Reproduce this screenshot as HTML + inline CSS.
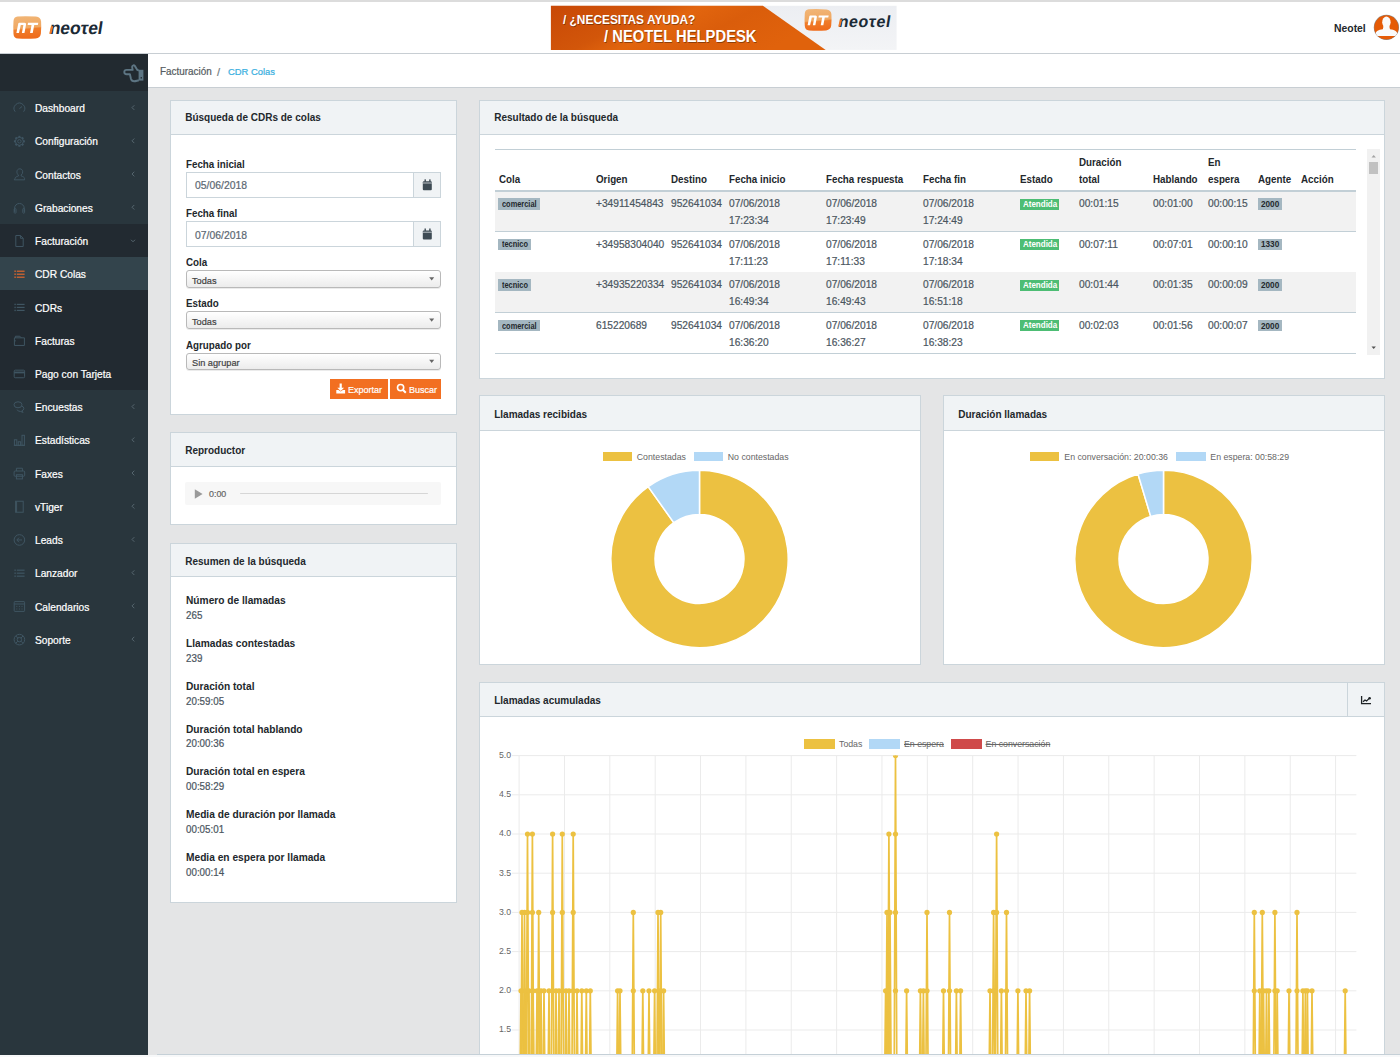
<!DOCTYPE html><html><head><meta charset="utf-8"><style>
html,body{margin:0;padding:0;}
body{width:1400px;height:1057px;overflow:hidden;position:relative;background:#e4e5e6;font-family:"Liberation Sans",sans-serif;}
.t{position:absolute;white-space:nowrap;}
.s{-webkit-text-stroke:0.22px currentColor;}
.r{position:absolute;box-sizing:border-box;}
svg{position:absolute;overflow:visible;}
</style></head><body>
<div class="r" style="left:0.00px;top:0.00px;width:1400.00px;height:2.00px;background:#dcdcdc"></div>
<div class="r" style="left:0.00px;top:2.00px;width:1400.00px;height:51.00px;background:#fff"></div>
<div class="r" style="left:0.00px;top:53.00px;width:1400.00px;height:1.00px;background:#c8ced3"></div>
<div class="r" style="left:0.00px;top:54.00px;width:148.00px;height:1001.00px;background:#29363d"></div>
<div class="r" style="left:0.00px;top:54.00px;width:148.00px;height:37.00px;background:#222a30"></div>
<div class="r" style="left:0.00px;top:224.00px;width:148.00px;height:166.00px;background:#222a31"></div>
<div class="r" style="left:0.00px;top:257.00px;width:148.00px;height:33.40px;background:#33444c"></div>
<div class="t  s" style="left:35.40px;top:103.25px;font-size:10.81px;line-height:10.81px;color:#fff;font-weight:400;transform:scaleX(0.9434);transform-origin:0 0;">Dashboard</div>
<svg style="left:0;top:0" width="1" height="1"><path d="M134.3 105.30000000000001 l-2.3 2.3 l2.3 2.3" fill="none" stroke="#56666f" stroke-width="1"/></svg>
<div class="t  s" style="left:35.40px;top:136.47px;font-size:10.81px;line-height:10.81px;color:#fff;font-weight:400;transform:scaleX(0.9434);transform-origin:0 0;">Configuración</div>
<svg style="left:0;top:0" width="1" height="1"><path d="M134.3 138.52 l-2.3 2.3 l2.3 2.3" fill="none" stroke="#56666f" stroke-width="1"/></svg>
<div class="t  s" style="left:35.40px;top:169.69px;font-size:10.81px;line-height:10.81px;color:#fff;font-weight:400;transform:scaleX(0.9434);transform-origin:0 0;">Contactos</div>
<svg style="left:0;top:0" width="1" height="1"><path d="M134.3 171.74 l-2.3 2.3 l2.3 2.3" fill="none" stroke="#56666f" stroke-width="1"/></svg>
<div class="t  s" style="left:35.40px;top:202.91px;font-size:10.81px;line-height:10.81px;color:#fff;font-weight:400;transform:scaleX(0.9434);transform-origin:0 0;">Grabaciones</div>
<svg style="left:0;top:0" width="1" height="1"><path d="M134.3 204.96 l-2.3 2.3 l2.3 2.3" fill="none" stroke="#56666f" stroke-width="1"/></svg>
<div class="t  s" style="left:35.40px;top:236.13px;font-size:10.81px;line-height:10.81px;color:#fff;font-weight:400;transform:scaleX(0.9434);transform-origin:0 0;">Facturación</div>
<svg style="left:0;top:0" width="1" height="1"><path d="M131 239.78 l2 2 l2 -2" fill="none" stroke="#56666f" stroke-width="1"/></svg>
<div class="t  s" style="left:35.40px;top:269.35px;font-size:10.81px;line-height:10.81px;color:#fff;font-weight:400;transform:scaleX(0.9434);transform-origin:0 0;">CDR Colas</div>
<div class="t  s" style="left:35.40px;top:302.57px;font-size:10.81px;line-height:10.81px;color:#fff;font-weight:400;transform:scaleX(0.9434);transform-origin:0 0;">CDRs</div>
<div class="t  s" style="left:35.40px;top:335.79px;font-size:10.81px;line-height:10.81px;color:#fff;font-weight:400;transform:scaleX(0.9434);transform-origin:0 0;">Facturas</div>
<div class="t  s" style="left:35.40px;top:369.01px;font-size:10.81px;line-height:10.81px;color:#fff;font-weight:400;transform:scaleX(0.9434);transform-origin:0 0;">Pago con Tarjeta</div>
<div class="t  s" style="left:35.40px;top:402.23px;font-size:10.81px;line-height:10.81px;color:#fff;font-weight:400;transform:scaleX(0.9434);transform-origin:0 0;">Encuestas</div>
<svg style="left:0;top:0" width="1" height="1"><path d="M134.3 404.28 l-2.3 2.3 l2.3 2.3" fill="none" stroke="#56666f" stroke-width="1"/></svg>
<div class="t  s" style="left:35.40px;top:435.45px;font-size:10.81px;line-height:10.81px;color:#fff;font-weight:400;transform:scaleX(0.9434);transform-origin:0 0;">Estadísticas</div>
<svg style="left:0;top:0" width="1" height="1"><path d="M134.3 437.5 l-2.3 2.3 l2.3 2.3" fill="none" stroke="#56666f" stroke-width="1"/></svg>
<div class="t  s" style="left:35.40px;top:468.67px;font-size:10.81px;line-height:10.81px;color:#fff;font-weight:400;transform:scaleX(0.9434);transform-origin:0 0;">Faxes</div>
<svg style="left:0;top:0" width="1" height="1"><path d="M134.3 470.7199999999999 l-2.3 2.3 l2.3 2.3" fill="none" stroke="#56666f" stroke-width="1"/></svg>
<div class="t  s" style="left:35.40px;top:501.89px;font-size:10.81px;line-height:10.81px;color:#fff;font-weight:400;transform:scaleX(0.9434);transform-origin:0 0;">vTiger</div>
<svg style="left:0;top:0" width="1" height="1"><path d="M134.3 503.93999999999994 l-2.3 2.3 l2.3 2.3" fill="none" stroke="#56666f" stroke-width="1"/></svg>
<div class="t  s" style="left:35.40px;top:535.11px;font-size:10.81px;line-height:10.81px;color:#fff;font-weight:400;transform:scaleX(0.9434);transform-origin:0 0;">Leads</div>
<svg style="left:0;top:0" width="1" height="1"><path d="M134.3 537.16 l-2.3 2.3 l2.3 2.3" fill="none" stroke="#56666f" stroke-width="1"/></svg>
<div class="t  s" style="left:35.40px;top:568.33px;font-size:10.81px;line-height:10.81px;color:#fff;font-weight:400;transform:scaleX(0.9434);transform-origin:0 0;">Lanzador</div>
<svg style="left:0;top:0" width="1" height="1"><path d="M134.3 570.38 l-2.3 2.3 l2.3 2.3" fill="none" stroke="#56666f" stroke-width="1"/></svg>
<div class="t  s" style="left:35.40px;top:601.55px;font-size:10.81px;line-height:10.81px;color:#fff;font-weight:400;transform:scaleX(0.9434);transform-origin:0 0;">Calendarios</div>
<svg style="left:0;top:0" width="1" height="1"><path d="M134.3 603.5999999999999 l-2.3 2.3 l2.3 2.3" fill="none" stroke="#56666f" stroke-width="1"/></svg>
<div class="t  s" style="left:35.40px;top:634.77px;font-size:10.81px;line-height:10.81px;color:#fff;font-weight:400;transform:scaleX(0.9434);transform-origin:0 0;">Soporte</div>
<svg style="left:0;top:0" width="1" height="1"><path d="M134.3 636.8199999999999 l-2.3 2.3 l2.3 2.3" fill="none" stroke="#56666f" stroke-width="1"/></svg>
<div class="r" style="left:148.00px;top:54.00px;width:1252.00px;height:33.00px;background:#fff"></div>
<div class="r" style="left:148.00px;top:87.00px;width:1252.00px;height:1.00px;background:#c8ced3"></div>
<div class="t  s" style="left:160.00px;top:66.62px;font-size:10.49px;line-height:10.49px;color:#555c61;font-weight:400;transform:scaleX(0.9434);transform-origin:0 0;">Facturación</div>
<div class="t  s" style="left:217.20px;top:66.13px;font-size:11.66px;line-height:11.66px;color:#6f7a80;font-weight:400;transform:scaleX(0.9434);transform-origin:0 0;">/</div>
<div class="t  s" style="left:227.80px;top:67.07px;font-size:9.96px;line-height:9.96px;color:#3aafe0;font-weight:400;transform:scaleX(0.9434);transform-origin:0 0;">CDR Colas</div>
<div class="r" style="left:170.00px;top:100.00px;width:287.00px;height:315.00px;background:#fff;border:1px solid #cbd5db"></div>
<div class="r" style="left:170.00px;top:100.00px;width:287.00px;height:35.00px;background:#f0f3f5;border:1px solid #cbd5db"></div>
<div class="t " style="left:185.20px;top:113.13px;font-size:10.00px;line-height:10.00px;color:#23282c;font-weight:700;">Búsqueda de CDRs de colas</div>
<div class="r" style="left:170.00px;top:432.00px;width:287.00px;height:92.50px;background:#fff;border:1px solid #cbd5db"></div>
<div class="r" style="left:170.00px;top:432.00px;width:287.00px;height:35.00px;background:#f0f3f5;border:1px solid #cbd5db"></div>
<div class="t " style="left:185.20px;top:446.04px;font-size:10.00px;line-height:10.00px;color:#23282c;font-weight:700;">Reproductor</div>
<div class="r" style="left:170.00px;top:543.00px;width:287.00px;height:359.50px;background:#fff;border:1px solid #cbd5db"></div>
<div class="r" style="left:170.00px;top:543.00px;width:287.00px;height:34.30px;background:#f0f3f5;border:1px solid #cbd5db"></div>
<div class="t " style="left:185.20px;top:556.63px;font-size:10.00px;line-height:10.00px;color:#23282c;font-weight:700;">Resumen de la búsqueda</div>
<div class="r" style="left:479.00px;top:100.00px;width:906.00px;height:278.50px;background:#fff;border:1px solid #cbd5db"></div>
<div class="r" style="left:479.00px;top:100.00px;width:906.00px;height:35.00px;background:#f0f3f5;border:1px solid #cbd5db"></div>
<div class="t " style="left:494.20px;top:113.13px;font-size:10.00px;line-height:10.00px;color:#23282c;font-weight:700;">Resultado de la búsqueda</div>
<div class="r" style="left:479.00px;top:395.00px;width:442.00px;height:270.00px;background:#fff;border:1px solid #cbd5db"></div>
<div class="r" style="left:479.00px;top:395.00px;width:442.00px;height:35.70px;background:#f0f3f5;border:1px solid #cbd5db"></div>
<div class="t " style="left:494.20px;top:409.64px;font-size:10.00px;line-height:10.00px;color:#23282c;font-weight:700;">Llamadas recibidas</div>
<div class="r" style="left:943.00px;top:395.00px;width:442.00px;height:270.00px;background:#fff;border:1px solid #cbd5db"></div>
<div class="r" style="left:943.00px;top:395.00px;width:442.00px;height:35.70px;background:#f0f3f5;border:1px solid #cbd5db"></div>
<div class="t " style="left:958.20px;top:409.64px;font-size:10.00px;line-height:10.00px;color:#23282c;font-weight:700;">Duración llamadas</div>
<div class="r" style="left:479.00px;top:682.00px;width:906.00px;height:418.00px;background:#fff;border:1px solid #cbd5db"></div>
<div class="r" style="left:479.00px;top:682.00px;width:906.00px;height:35.00px;background:#f0f3f5;border:1px solid #cbd5db"></div>
<div class="t " style="left:494.20px;top:696.24px;font-size:10.00px;line-height:10.00px;color:#23282c;font-weight:700;">Llamadas acumuladas</div>
<div class="t " style="left:185.70px;top:160.31px;font-size:10.39px;line-height:10.39px;color:#23282c;font-weight:700;transform:scaleX(0.9434);transform-origin:0 0;">Fecha inicial</div>
<div class="t " style="left:185.70px;top:209.31px;font-size:10.39px;line-height:10.39px;color:#23282c;font-weight:700;transform:scaleX(0.9434);transform-origin:0 0;">Fecha final</div>
<div class="t " style="left:185.70px;top:258.11px;font-size:10.39px;line-height:10.39px;color:#23282c;font-weight:700;transform:scaleX(0.9434);transform-origin:0 0;">Cola</div>
<div class="t " style="left:185.70px;top:299.31px;font-size:10.39px;line-height:10.39px;color:#23282c;font-weight:700;transform:scaleX(0.9434);transform-origin:0 0;">Estado</div>
<div class="t " style="left:185.70px;top:341.11px;font-size:10.39px;line-height:10.39px;color:#23282c;font-weight:700;transform:scaleX(0.9434);transform-origin:0 0;">Agrupado por</div>
<div class="r" style="left:185.50px;top:172.00px;width:255.50px;height:25.70px;background:#fff;border:1px solid #cbd5db"></div>
<div class="r" style="left:413.00px;top:172.00px;width:28.00px;height:25.70px;background:#f0f3f5;border:1px solid #cbd5db"></div>
<div class="t  s" style="left:195.40px;top:180.47px;font-size:11.02px;line-height:11.02px;color:#5c6873;font-weight:400;transform:scaleX(0.9434);transform-origin:0 0;">05/06/2018</div>
<svg style="left:0;top:0" width="1" height="1"><g fill="#3e4b54"><rect x="422.8" y="181.35" width="9" height="9" rx="1"/><rect x="424.5" y="179.35" width="1.4" height="2.5"/><rect x="429.2" y="179.35" width="1.4" height="2.5"/></g><rect x="422.8" y="182.65" width="9" height="0.7" fill="#f0f3f5"/></svg>
<div class="r" style="left:185.50px;top:221.20px;width:255.50px;height:25.60px;background:#fff;border:1px solid #cbd5db"></div>
<div class="r" style="left:413.00px;top:221.20px;width:28.00px;height:25.60px;background:#f0f3f5;border:1px solid #cbd5db"></div>
<div class="t  s" style="left:195.40px;top:229.67px;font-size:11.02px;line-height:11.02px;color:#5c6873;font-weight:400;transform:scaleX(0.9434);transform-origin:0 0;">07/06/2018</div>
<svg style="left:0;top:0" width="1" height="1"><g fill="#3e4b54"><rect x="422.8" y="230.5" width="9" height="9" rx="1"/><rect x="424.5" y="228.5" width="1.4" height="2.5"/><rect x="429.2" y="228.5" width="1.4" height="2.5"/></g><rect x="422.8" y="231.8" width="9" height="0.7" fill="#f0f3f5"/></svg>
<div class="r" style="left:185.50px;top:269.70px;width:255.50px;height:18.80px;border:1px solid #b9b9b9;border-radius:3px;background:linear-gradient(#ffffff,#ececec);box-shadow:0 1px 0 rgba(0,0,0,.08)"></div>
<div class="t  s" style="left:192.40px;top:275.54px;font-size:9.75px;line-height:9.75px;color:#444;font-weight:400;transform:scaleX(0.9434);transform-origin:0 0;">Todas</div>
<svg style="left:0;top:0" width="1" height="1"><path d="M429.2 277.3 h5 l-2.5 3.2z" fill="#666"/></svg>
<div class="r" style="left:185.50px;top:311.10px;width:255.50px;height:18.30px;border:1px solid #b9b9b9;border-radius:3px;background:linear-gradient(#ffffff,#ececec);box-shadow:0 1px 0 rgba(0,0,0,.08)"></div>
<div class="t  s" style="left:192.40px;top:316.94px;font-size:9.75px;line-height:9.75px;color:#444;font-weight:400;transform:scaleX(0.9434);transform-origin:0 0;">Todas</div>
<svg style="left:0;top:0" width="1" height="1"><path d="M429.2 318.45 h5 l-2.5 3.2z" fill="#666"/></svg>
<div class="r" style="left:185.50px;top:352.60px;width:255.50px;height:17.80px;border:1px solid #b9b9b9;border-radius:3px;background:linear-gradient(#ffffff,#ececec);box-shadow:0 1px 0 rgba(0,0,0,.08)"></div>
<div class="t  s" style="left:192.40px;top:358.44px;font-size:9.75px;line-height:9.75px;color:#444;font-weight:400;transform:scaleX(0.9434);transform-origin:0 0;">Sin agrupar</div>
<svg style="left:0;top:0" width="1" height="1"><path d="M429.2 359.7 h5 l-2.5 3.2z" fill="#666"/></svg>
<div class="r" style="left:329.50px;top:378.60px;width:58.40px;height:20.10px;background:#f26f21"></div>
<div class="r" style="left:390.20px;top:378.60px;width:50.80px;height:20.10px;background:#f26f21"></div>
<div class="t  s" style="left:347.70px;top:385.42px;font-size:9.54px;line-height:9.54px;color:#fff;font-weight:400;transform:scaleX(0.9434);transform-origin:0 0;">Exportar</div>
<div class="t  s" style="left:408.60px;top:385.42px;font-size:9.54px;line-height:9.54px;color:#fff;font-weight:400;transform:scaleX(0.9434);transform-origin:0 0;">Buscar</div>
<svg style="left:0;top:0" width="1" height="1"><g fill="#fff"><rect x="339.6" y="383.5" width="2.2" height="5"/><path d="M337.3 387.8 h6.8 l-3.4 3.3z"/><path d="M336.3 390 h2.2 l2.2 1.6 l2.2 -1.6 h2.2 v3.5 h-8.8z"/></g></svg>
<svg style="left:0;top:0" width="1" height="1"><circle cx="400.6" cy="387.6" r="3.1" fill="none" stroke="#fff" stroke-width="1.6"/><path d="M402.8 389.8 l3 3" stroke="#fff" stroke-width="2"/></svg>
<div class="r" style="left:185.40px;top:481.90px;width:255.60px;height:23.60px;background:#f7f7f7;border-radius:2px"></div>
<svg style="left:0;top:0" width="1" height="1"><path d="M194.8 489.3 v9.4 l7.8 -4.7z" fill="#9a9a9a"/></svg>
<div class="t  s" style="left:209.20px;top:488.91px;font-size:9.43px;line-height:9.43px;color:#666;font-weight:400;transform:scaleX(0.9434);transform-origin:0 0;">0:00</div>
<div class="r" style="left:239.80px;top:493.00px;width:188.20px;height:1.20px;background:#d6d6d6;border-radius:1px"></div>
<div class="t " style="left:185.90px;top:595.25px;font-size:10.81px;line-height:10.81px;color:#23282c;font-weight:700;transform:scaleX(0.9434);transform-origin:0 0;">Número de llamadas</div>
<div class="t  s" style="left:185.90px;top:611.21px;font-size:10.39px;line-height:10.39px;color:#4b565f;font-weight:400;transform:scaleX(0.9434);transform-origin:0 0;">265</div>
<div class="t " style="left:185.90px;top:638.00px;font-size:10.81px;line-height:10.81px;color:#23282c;font-weight:700;transform:scaleX(0.9434);transform-origin:0 0;">Llamadas contestadas</div>
<div class="t  s" style="left:185.90px;top:653.96px;font-size:10.39px;line-height:10.39px;color:#4b565f;font-weight:400;transform:scaleX(0.9434);transform-origin:0 0;">239</div>
<div class="t " style="left:185.90px;top:680.75px;font-size:10.81px;line-height:10.81px;color:#23282c;font-weight:700;transform:scaleX(0.9434);transform-origin:0 0;">Duración total</div>
<div class="t  s" style="left:185.90px;top:696.71px;font-size:10.39px;line-height:10.39px;color:#4b565f;font-weight:400;transform:scaleX(0.9434);transform-origin:0 0;">20:59:05</div>
<div class="t " style="left:185.90px;top:723.50px;font-size:10.81px;line-height:10.81px;color:#23282c;font-weight:700;transform:scaleX(0.9434);transform-origin:0 0;">Duración total hablando</div>
<div class="t  s" style="left:185.90px;top:739.46px;font-size:10.39px;line-height:10.39px;color:#4b565f;font-weight:400;transform:scaleX(0.9434);transform-origin:0 0;">20:00:36</div>
<div class="t " style="left:185.90px;top:766.25px;font-size:10.81px;line-height:10.81px;color:#23282c;font-weight:700;transform:scaleX(0.9434);transform-origin:0 0;">Duración total en espera</div>
<div class="t  s" style="left:185.90px;top:782.21px;font-size:10.39px;line-height:10.39px;color:#4b565f;font-weight:400;transform:scaleX(0.9434);transform-origin:0 0;">00:58:29</div>
<div class="t " style="left:185.90px;top:809.00px;font-size:10.81px;line-height:10.81px;color:#23282c;font-weight:700;transform:scaleX(0.9434);transform-origin:0 0;">Media de duración por llamada</div>
<div class="t  s" style="left:185.90px;top:824.96px;font-size:10.39px;line-height:10.39px;color:#4b565f;font-weight:400;transform:scaleX(0.9434);transform-origin:0 0;">00:05:01</div>
<div class="t " style="left:185.90px;top:851.75px;font-size:10.81px;line-height:10.81px;color:#23282c;font-weight:700;transform:scaleX(0.9434);transform-origin:0 0;">Media en espera por llamada</div>
<div class="t  s" style="left:185.90px;top:867.71px;font-size:10.39px;line-height:10.39px;color:#4b565f;font-weight:400;transform:scaleX(0.9434);transform-origin:0 0;">00:00:14</div>
<div class="r" style="left:494.60px;top:149.00px;width:861.20px;height:1.00px;background:#c2cfd6"></div>
<div class="t " style="left:498.60px;top:174.51px;font-size:10.39px;line-height:10.39px;color:#23282c;font-weight:700;transform:scaleX(0.9434);transform-origin:0 0;">Cola</div>
<div class="t " style="left:595.50px;top:174.51px;font-size:10.39px;line-height:10.39px;color:#23282c;font-weight:700;transform:scaleX(0.9434);transform-origin:0 0;">Origen</div>
<div class="t " style="left:671.40px;top:174.51px;font-size:10.39px;line-height:10.39px;color:#23282c;font-weight:700;transform:scaleX(0.9434);transform-origin:0 0;">Destino</div>
<div class="t " style="left:729.30px;top:174.51px;font-size:10.39px;line-height:10.39px;color:#23282c;font-weight:700;transform:scaleX(0.9434);transform-origin:0 0;">Fecha inicio</div>
<div class="t " style="left:826.00px;top:174.51px;font-size:10.39px;line-height:10.39px;color:#23282c;font-weight:700;transform:scaleX(0.9434);transform-origin:0 0;">Fecha respuesta</div>
<div class="t " style="left:923.00px;top:174.51px;font-size:10.39px;line-height:10.39px;color:#23282c;font-weight:700;transform:scaleX(0.9434);transform-origin:0 0;">Fecha fin</div>
<div class="t " style="left:1020.30px;top:174.51px;font-size:10.39px;line-height:10.39px;color:#23282c;font-weight:700;transform:scaleX(0.9434);transform-origin:0 0;">Estado</div>
<div class="t " style="left:1078.70px;top:174.51px;font-size:10.39px;line-height:10.39px;color:#23282c;font-weight:700;transform:scaleX(0.9434);transform-origin:0 0;">total</div>
<div class="t " style="left:1152.60px;top:174.51px;font-size:10.39px;line-height:10.39px;color:#23282c;font-weight:700;transform:scaleX(0.9434);transform-origin:0 0;">Hablando</div>
<div class="t " style="left:1207.50px;top:174.51px;font-size:10.39px;line-height:10.39px;color:#23282c;font-weight:700;transform:scaleX(0.9434);transform-origin:0 0;">espera</div>
<div class="t " style="left:1258.30px;top:174.51px;font-size:10.39px;line-height:10.39px;color:#23282c;font-weight:700;transform:scaleX(0.9434);transform-origin:0 0;">Agente</div>
<div class="t " style="left:1301.00px;top:174.51px;font-size:10.39px;line-height:10.39px;color:#23282c;font-weight:700;transform:scaleX(0.9434);transform-origin:0 0;">Acción</div>
<div class="t " style="left:1078.70px;top:157.51px;font-size:10.39px;line-height:10.39px;color:#23282c;font-weight:700;transform:scaleX(0.9434);transform-origin:0 0;">Duración</div>
<div class="t " style="left:1207.50px;top:157.51px;font-size:10.39px;line-height:10.39px;color:#23282c;font-weight:700;transform:scaleX(0.9434);transform-origin:0 0;">En</div>
<div class="r" style="left:494.60px;top:189.80px;width:861.20px;height:1.80px;background:#c2cfd6"></div>
<div class="r" style="left:494.60px;top:191.60px;width:861.20px;height:39.90px;background:#f2f2f2"></div>
<div class="r" style="left:494.60px;top:231.00px;width:861.20px;height:1.20px;background:#c2cfd6"></div>
<div class="r" style="left:498.10px;top:197.90px;width:41.60px;height:11.80px;background:#a4b7c1"></div>
<div class="t " style="left:501.60px;top:199.77px;font-size:9.25px;line-height:9.25px;color:#23282c;font-weight:700;transform:scaleX(0.8000);transform-origin:0 0;">comercial</div>
<div class="t  s" style="left:595.50px;top:198.25px;font-size:10.81px;line-height:10.81px;color:#4b565f;font-weight:400;transform:scaleX(0.9434);transform-origin:0 0;">+34911454843</div>
<div class="t  s" style="left:671.40px;top:198.25px;font-size:10.81px;line-height:10.81px;color:#4b565f;font-weight:400;transform:scaleX(0.9434);transform-origin:0 0;">952641034</div>
<div class="t  s" style="left:729.30px;top:198.25px;font-size:10.81px;line-height:10.81px;color:#4b565f;font-weight:400;transform:scaleX(0.9434);transform-origin:0 0;">07/06/2018</div>
<div class="t  s" style="left:729.30px;top:215.25px;font-size:10.81px;line-height:10.81px;color:#4b565f;font-weight:400;transform:scaleX(0.9434);transform-origin:0 0;">17:23:34</div>
<div class="t  s" style="left:826.00px;top:198.25px;font-size:10.81px;line-height:10.81px;color:#4b565f;font-weight:400;transform:scaleX(0.9434);transform-origin:0 0;">07/06/2018</div>
<div class="t  s" style="left:826.00px;top:215.25px;font-size:10.81px;line-height:10.81px;color:#4b565f;font-weight:400;transform:scaleX(0.9434);transform-origin:0 0;">17:23:49</div>
<div class="t  s" style="left:923.00px;top:198.25px;font-size:10.81px;line-height:10.81px;color:#4b565f;font-weight:400;transform:scaleX(0.9434);transform-origin:0 0;">07/06/2018</div>
<div class="t  s" style="left:923.00px;top:215.25px;font-size:10.81px;line-height:10.81px;color:#4b565f;font-weight:400;transform:scaleX(0.9434);transform-origin:0 0;">17:24:49</div>
<div class="r" style="left:1020.30px;top:198.50px;width:38.50px;height:11.00px;background:#4dbd74"></div>
<div class="t " style="left:1023.20px;top:199.61px;font-size:9.20px;line-height:9.20px;color:#fff;font-weight:700;transform:scaleX(0.8696);transform-origin:0 0;">Atendida</div>
<div class="t  s" style="left:1078.70px;top:198.25px;font-size:10.81px;line-height:10.81px;color:#4b565f;font-weight:400;transform:scaleX(0.9434);transform-origin:0 0;">00:01:15</div>
<div class="t  s" style="left:1152.60px;top:198.25px;font-size:10.81px;line-height:10.81px;color:#4b565f;font-weight:400;transform:scaleX(0.9434);transform-origin:0 0;">00:01:00</div>
<div class="t  s" style="left:1207.50px;top:198.25px;font-size:10.81px;line-height:10.81px;color:#4b565f;font-weight:400;transform:scaleX(0.9434);transform-origin:0 0;">00:00:15</div>
<div class="r" style="left:1258.20px;top:198.10px;width:24.30px;height:11.60px;background:#a4b7c1"></div>
<div class="t " style="left:1260.80px;top:199.83px;font-size:9.18px;line-height:9.18px;color:#23282c;font-weight:700;transform:scaleX(0.8929);transform-origin:0 0;">2000</div>
<div class="r" style="left:494.60px;top:271.60px;width:861.20px;height:1.20px;background:#c2cfd6"></div>
<div class="r" style="left:498.10px;top:238.50px;width:33.00px;height:11.80px;background:#a4b7c1"></div>
<div class="t " style="left:501.60px;top:240.37px;font-size:9.25px;line-height:9.25px;color:#23282c;font-weight:700;transform:scaleX(0.8000);transform-origin:0 0;">tecnico</div>
<div class="t  s" style="left:595.50px;top:238.85px;font-size:10.81px;line-height:10.81px;color:#4b565f;font-weight:400;transform:scaleX(0.9434);transform-origin:0 0;">+34958304040</div>
<div class="t  s" style="left:671.40px;top:238.85px;font-size:10.81px;line-height:10.81px;color:#4b565f;font-weight:400;transform:scaleX(0.9434);transform-origin:0 0;">952641034</div>
<div class="t  s" style="left:729.30px;top:238.85px;font-size:10.81px;line-height:10.81px;color:#4b565f;font-weight:400;transform:scaleX(0.9434);transform-origin:0 0;">07/06/2018</div>
<div class="t  s" style="left:729.30px;top:255.85px;font-size:10.81px;line-height:10.81px;color:#4b565f;font-weight:400;transform:scaleX(0.9434);transform-origin:0 0;">17:11:23</div>
<div class="t  s" style="left:826.00px;top:238.85px;font-size:10.81px;line-height:10.81px;color:#4b565f;font-weight:400;transform:scaleX(0.9434);transform-origin:0 0;">07/06/2018</div>
<div class="t  s" style="left:826.00px;top:255.85px;font-size:10.81px;line-height:10.81px;color:#4b565f;font-weight:400;transform:scaleX(0.9434);transform-origin:0 0;">17:11:33</div>
<div class="t  s" style="left:923.00px;top:238.85px;font-size:10.81px;line-height:10.81px;color:#4b565f;font-weight:400;transform:scaleX(0.9434);transform-origin:0 0;">07/06/2018</div>
<div class="t  s" style="left:923.00px;top:255.85px;font-size:10.81px;line-height:10.81px;color:#4b565f;font-weight:400;transform:scaleX(0.9434);transform-origin:0 0;">17:18:34</div>
<div class="r" style="left:1020.30px;top:239.10px;width:38.50px;height:11.00px;background:#4dbd74"></div>
<div class="t " style="left:1023.20px;top:240.21px;font-size:9.20px;line-height:9.20px;color:#fff;font-weight:700;transform:scaleX(0.8696);transform-origin:0 0;">Atendida</div>
<div class="t  s" style="left:1078.70px;top:238.85px;font-size:10.81px;line-height:10.81px;color:#4b565f;font-weight:400;transform:scaleX(0.9434);transform-origin:0 0;">00:07:11</div>
<div class="t  s" style="left:1152.60px;top:238.85px;font-size:10.81px;line-height:10.81px;color:#4b565f;font-weight:400;transform:scaleX(0.9434);transform-origin:0 0;">00:07:01</div>
<div class="t  s" style="left:1207.50px;top:238.85px;font-size:10.81px;line-height:10.81px;color:#4b565f;font-weight:400;transform:scaleX(0.9434);transform-origin:0 0;">00:00:10</div>
<div class="r" style="left:1258.20px;top:238.70px;width:24.30px;height:11.60px;background:#a4b7c1"></div>
<div class="t " style="left:1260.80px;top:240.43px;font-size:9.18px;line-height:9.18px;color:#23282c;font-weight:700;transform:scaleX(0.8929);transform-origin:0 0;">1330</div>
<div class="r" style="left:494.60px;top:272.10px;width:861.20px;height:40.60px;background:#f2f2f2"></div>
<div class="r" style="left:494.60px;top:312.20px;width:861.20px;height:1.20px;background:#c2cfd6"></div>
<div class="r" style="left:498.10px;top:279.10px;width:33.00px;height:11.80px;background:#a4b7c1"></div>
<div class="t " style="left:501.60px;top:280.97px;font-size:9.25px;line-height:9.25px;color:#23282c;font-weight:700;transform:scaleX(0.8000);transform-origin:0 0;">tecnico</div>
<div class="t  s" style="left:595.50px;top:279.45px;font-size:10.81px;line-height:10.81px;color:#4b565f;font-weight:400;transform:scaleX(0.9434);transform-origin:0 0;">+34935220334</div>
<div class="t  s" style="left:671.40px;top:279.45px;font-size:10.81px;line-height:10.81px;color:#4b565f;font-weight:400;transform:scaleX(0.9434);transform-origin:0 0;">952641034</div>
<div class="t  s" style="left:729.30px;top:279.45px;font-size:10.81px;line-height:10.81px;color:#4b565f;font-weight:400;transform:scaleX(0.9434);transform-origin:0 0;">07/06/2018</div>
<div class="t  s" style="left:729.30px;top:296.45px;font-size:10.81px;line-height:10.81px;color:#4b565f;font-weight:400;transform:scaleX(0.9434);transform-origin:0 0;">16:49:34</div>
<div class="t  s" style="left:826.00px;top:279.45px;font-size:10.81px;line-height:10.81px;color:#4b565f;font-weight:400;transform:scaleX(0.9434);transform-origin:0 0;">07/06/2018</div>
<div class="t  s" style="left:826.00px;top:296.45px;font-size:10.81px;line-height:10.81px;color:#4b565f;font-weight:400;transform:scaleX(0.9434);transform-origin:0 0;">16:49:43</div>
<div class="t  s" style="left:923.00px;top:279.45px;font-size:10.81px;line-height:10.81px;color:#4b565f;font-weight:400;transform:scaleX(0.9434);transform-origin:0 0;">07/06/2018</div>
<div class="t  s" style="left:923.00px;top:296.45px;font-size:10.81px;line-height:10.81px;color:#4b565f;font-weight:400;transform:scaleX(0.9434);transform-origin:0 0;">16:51:18</div>
<div class="r" style="left:1020.30px;top:279.70px;width:38.50px;height:11.00px;background:#4dbd74"></div>
<div class="t " style="left:1023.20px;top:280.81px;font-size:9.20px;line-height:9.20px;color:#fff;font-weight:700;transform:scaleX(0.8696);transform-origin:0 0;">Atendida</div>
<div class="t  s" style="left:1078.70px;top:279.45px;font-size:10.81px;line-height:10.81px;color:#4b565f;font-weight:400;transform:scaleX(0.9434);transform-origin:0 0;">00:01:44</div>
<div class="t  s" style="left:1152.60px;top:279.45px;font-size:10.81px;line-height:10.81px;color:#4b565f;font-weight:400;transform:scaleX(0.9434);transform-origin:0 0;">00:01:35</div>
<div class="t  s" style="left:1207.50px;top:279.45px;font-size:10.81px;line-height:10.81px;color:#4b565f;font-weight:400;transform:scaleX(0.9434);transform-origin:0 0;">00:00:09</div>
<div class="r" style="left:1258.20px;top:279.30px;width:24.30px;height:11.60px;background:#a4b7c1"></div>
<div class="t " style="left:1260.80px;top:281.03px;font-size:9.18px;line-height:9.18px;color:#23282c;font-weight:700;transform:scaleX(0.8929);transform-origin:0 0;">2000</div>
<div class="r" style="left:494.60px;top:352.90px;width:861.20px;height:1.20px;background:#c2cfd6"></div>
<div class="r" style="left:498.10px;top:319.70px;width:41.60px;height:11.80px;background:#a4b7c1"></div>
<div class="t " style="left:501.60px;top:321.57px;font-size:9.25px;line-height:9.25px;color:#23282c;font-weight:700;transform:scaleX(0.8000);transform-origin:0 0;">comercial</div>
<div class="t  s" style="left:595.50px;top:320.05px;font-size:10.81px;line-height:10.81px;color:#4b565f;font-weight:400;transform:scaleX(0.9434);transform-origin:0 0;">615220689</div>
<div class="t  s" style="left:671.40px;top:320.05px;font-size:10.81px;line-height:10.81px;color:#4b565f;font-weight:400;transform:scaleX(0.9434);transform-origin:0 0;">952641034</div>
<div class="t  s" style="left:729.30px;top:320.05px;font-size:10.81px;line-height:10.81px;color:#4b565f;font-weight:400;transform:scaleX(0.9434);transform-origin:0 0;">07/06/2018</div>
<div class="t  s" style="left:729.30px;top:337.05px;font-size:10.81px;line-height:10.81px;color:#4b565f;font-weight:400;transform:scaleX(0.9434);transform-origin:0 0;">16:36:20</div>
<div class="t  s" style="left:826.00px;top:320.05px;font-size:10.81px;line-height:10.81px;color:#4b565f;font-weight:400;transform:scaleX(0.9434);transform-origin:0 0;">07/06/2018</div>
<div class="t  s" style="left:826.00px;top:337.05px;font-size:10.81px;line-height:10.81px;color:#4b565f;font-weight:400;transform:scaleX(0.9434);transform-origin:0 0;">16:36:27</div>
<div class="t  s" style="left:923.00px;top:320.05px;font-size:10.81px;line-height:10.81px;color:#4b565f;font-weight:400;transform:scaleX(0.9434);transform-origin:0 0;">07/06/2018</div>
<div class="t  s" style="left:923.00px;top:337.05px;font-size:10.81px;line-height:10.81px;color:#4b565f;font-weight:400;transform:scaleX(0.9434);transform-origin:0 0;">16:38:23</div>
<div class="r" style="left:1020.30px;top:320.30px;width:38.50px;height:11.00px;background:#4dbd74"></div>
<div class="t " style="left:1023.20px;top:321.41px;font-size:9.20px;line-height:9.20px;color:#fff;font-weight:700;transform:scaleX(0.8696);transform-origin:0 0;">Atendida</div>
<div class="t  s" style="left:1078.70px;top:320.05px;font-size:10.81px;line-height:10.81px;color:#4b565f;font-weight:400;transform:scaleX(0.9434);transform-origin:0 0;">00:02:03</div>
<div class="t  s" style="left:1152.60px;top:320.05px;font-size:10.81px;line-height:10.81px;color:#4b565f;font-weight:400;transform:scaleX(0.9434);transform-origin:0 0;">00:01:56</div>
<div class="t  s" style="left:1207.50px;top:320.05px;font-size:10.81px;line-height:10.81px;color:#4b565f;font-weight:400;transform:scaleX(0.9434);transform-origin:0 0;">00:00:07</div>
<div class="r" style="left:1258.20px;top:319.90px;width:24.30px;height:11.60px;background:#a4b7c1"></div>
<div class="t " style="left:1260.80px;top:321.63px;font-size:9.18px;line-height:9.18px;color:#23282c;font-weight:700;transform:scaleX(0.8929);transform-origin:0 0;">2000</div>
<div class="r" style="left:1367.40px;top:149.40px;width:12.60px;height:205.60px;background:#f1f1f1"></div>
<div class="r" style="left:1368.90px;top:162.00px;width:9.60px;height:12.00px;background:#c1c1c1"></div>
<svg style="left:0;top:0" width="1" height="1"><path d="M1371.5 157.5 h4.4 l-2.2 -2.6z" fill="#a3a3a3"/><path d="M1371.5 346.5 h4.4 l-2.2 2.6z" fill="#505050"/></svg>
<svg style="left:0;top:0" width="1" height="1"><path d="M699.50 470.30 A88.7 88.7 0 1 1 648.22 486.63 L673.77 522.69 A44.5 44.5 0 1 0 699.50 514.50Z" fill="#ecc141" stroke="#fff" stroke-width="1.5"/><path d="M648.22 486.63 A88.7 88.7 0 0 1 699.50 470.30 L699.50 514.50 A44.5 44.5 0 0 0 673.77 522.69Z" fill="#b2d8f6" stroke="#fff" stroke-width="1.5"/></svg>
<svg style="left:0;top:0" width="1" height="1"><path d="M1163.50 470.30 A88.7 88.7 0 1 1 1137.98 474.05 L1150.70 516.38 A44.5 44.5 0 1 0 1163.50 514.50Z" fill="#ecc141" stroke="#fff" stroke-width="1.5"/><path d="M1137.98 474.05 A88.7 88.7 0 0 1 1163.50 470.30 L1163.50 514.50 A44.5 44.5 0 0 0 1150.70 516.38Z" fill="#b2d8f6" stroke="#fff" stroke-width="1.5"/></svg>
<div class="r" style="left:602.60px;top:452.20px;width:29.20px;height:9.00px;background:#ecc141"></div>
<div class="t " style="left:636.80px;top:453.29px;font-size:8.75px;line-height:8.75px;color:#666;font-weight:400;">Contestadas</div>
<div class="r" style="left:693.90px;top:452.20px;width:28.90px;height:9.00px;background:#b2d8f6"></div>
<div class="t " style="left:727.80px;top:453.29px;font-size:8.75px;line-height:8.75px;color:#666;font-weight:400;">No contestadas</div>
<div class="r" style="left:1029.70px;top:452.20px;width:29.50px;height:9.00px;background:#ecc141"></div>
<div class="t " style="left:1064.30px;top:453.29px;font-size:8.75px;line-height:8.75px;color:#666;font-weight:400;">En conversación: 20:00:36</div>
<div class="r" style="left:1176.00px;top:452.20px;width:29.60px;height:9.00px;background:#b2d8f6"></div>
<div class="t " style="left:1210.30px;top:453.29px;font-size:8.75px;line-height:8.75px;color:#666;font-weight:400;">En espera: 00:58:29</div>
<div class="r" style="left:1347.00px;top:683.00px;width:1.00px;height:33.50px;background:#cbd5db"></div>
<svg style="left:0;top:0" width="1" height="1"><g fill="none" stroke="#1e2326" stroke-width="1.3"><path d="M1361.6 696 v7.6 h9.4"/><path d="M1363 701.8 l2 -1.8 l1.6 1 l2.4 -2.4"/></g><circle cx="1369.6" cy="698.2" r="1.3" fill="#1e2326"/></svg>
<div class="r" style="left:803.80px;top:738.60px;width:31.20px;height:10.00px;background:#ecc141"></div>
<div class="t " style="left:839.00px;top:739.69px;font-size:8.75px;line-height:8.75px;color:#666;font-weight:400;">Todas</div>
<div class="r" style="left:869.00px;top:738.60px;width:31.00px;height:10.00px;background:#b2d8f6"></div>
<div class="t " style="left:904.00px;top:739.69px;font-size:8.75px;line-height:8.75px;color:#666;font-weight:400;"><s>En espera</s></div>
<div class="r" style="left:950.90px;top:738.60px;width:31.10px;height:10.00px;background:#cf4a4a"></div>
<div class="t " style="left:985.60px;top:739.69px;font-size:8.75px;line-height:8.75px;color:#666;font-weight:400;"><s>En conversación</s></div>
<svg style="left:0;top:0" width="1400" height="1057"><line x1="519.10" y1="755.6" x2="519.10" y2="1057" stroke="#ebebeb" stroke-width="1"/><line x1="564.46" y1="755.6" x2="564.46" y2="1057" stroke="#ebebeb" stroke-width="1"/><line x1="609.82" y1="755.6" x2="609.82" y2="1057" stroke="#ebebeb" stroke-width="1"/><line x1="655.18" y1="755.6" x2="655.18" y2="1057" stroke="#ebebeb" stroke-width="1"/><line x1="700.54" y1="755.6" x2="700.54" y2="1057" stroke="#ebebeb" stroke-width="1"/><line x1="745.90" y1="755.6" x2="745.90" y2="1057" stroke="#ebebeb" stroke-width="1"/><line x1="791.26" y1="755.6" x2="791.26" y2="1057" stroke="#ebebeb" stroke-width="1"/><line x1="836.62" y1="755.6" x2="836.62" y2="1057" stroke="#ebebeb" stroke-width="1"/><line x1="881.98" y1="755.6" x2="881.98" y2="1057" stroke="#ebebeb" stroke-width="1"/><line x1="927.34" y1="755.6" x2="927.34" y2="1057" stroke="#ebebeb" stroke-width="1"/><line x1="972.70" y1="755.6" x2="972.70" y2="1057" stroke="#ebebeb" stroke-width="1"/><line x1="1018.06" y1="755.6" x2="1018.06" y2="1057" stroke="#ebebeb" stroke-width="1"/><line x1="1063.42" y1="755.6" x2="1063.42" y2="1057" stroke="#ebebeb" stroke-width="1"/><line x1="1108.78" y1="755.6" x2="1108.78" y2="1057" stroke="#ebebeb" stroke-width="1"/><line x1="1154.14" y1="755.6" x2="1154.14" y2="1057" stroke="#ebebeb" stroke-width="1"/><line x1="1199.50" y1="755.6" x2="1199.50" y2="1057" stroke="#ebebeb" stroke-width="1"/><line x1="1244.86" y1="755.6" x2="1244.86" y2="1057" stroke="#ebebeb" stroke-width="1"/><line x1="1290.22" y1="755.6" x2="1290.22" y2="1057" stroke="#ebebeb" stroke-width="1"/><line x1="1335.58" y1="755.6" x2="1335.58" y2="1057" stroke="#ebebeb" stroke-width="1"/><line x1="512" y1="755.60" x2="1356.4" y2="755.60" stroke="#ebebeb" stroke-width="1"/><line x1="512" y1="794.80" x2="1356.4" y2="794.80" stroke="#ebebeb" stroke-width="1"/><line x1="512" y1="834.00" x2="1356.4" y2="834.00" stroke="#ebebeb" stroke-width="1"/><line x1="512" y1="873.20" x2="1356.4" y2="873.20" stroke="#ebebeb" stroke-width="1"/><line x1="512" y1="912.40" x2="1356.4" y2="912.40" stroke="#ebebeb" stroke-width="1"/><line x1="512" y1="951.60" x2="1356.4" y2="951.60" stroke="#ebebeb" stroke-width="1"/><line x1="512" y1="990.80" x2="1356.4" y2="990.80" stroke="#ebebeb" stroke-width="1"/><line x1="512" y1="1030.00" x2="1356.4" y2="1030.00" stroke="#ebebeb" stroke-width="1"/><line x1="512" y1="1069.20" x2="1356.4" y2="1069.20" stroke="#ebebeb" stroke-width="1"/></svg>
<div class="t " style="left:499.10px;top:749.96px;font-size:9.97px;line-height:9.97px;color:#666;font-weight:400;transform:scaleX(0.8772);transform-origin:0 0;">5.0</div>
<div class="t " style="left:499.10px;top:789.16px;font-size:9.97px;line-height:9.97px;color:#666;font-weight:400;transform:scaleX(0.8772);transform-origin:0 0;">4.5</div>
<div class="t " style="left:499.10px;top:828.36px;font-size:9.97px;line-height:9.97px;color:#666;font-weight:400;transform:scaleX(0.8772);transform-origin:0 0;">4.0</div>
<div class="t " style="left:499.10px;top:867.56px;font-size:9.97px;line-height:9.97px;color:#666;font-weight:400;transform:scaleX(0.8772);transform-origin:0 0;">3.5</div>
<div class="t " style="left:499.10px;top:906.76px;font-size:9.97px;line-height:9.97px;color:#666;font-weight:400;transform:scaleX(0.8772);transform-origin:0 0;">3.0</div>
<div class="t " style="left:499.10px;top:945.96px;font-size:9.97px;line-height:9.97px;color:#666;font-weight:400;transform:scaleX(0.8772);transform-origin:0 0;">2.5</div>
<div class="t " style="left:499.10px;top:985.16px;font-size:9.97px;line-height:9.97px;color:#666;font-weight:400;transform:scaleX(0.8772);transform-origin:0 0;">2.0</div>
<div class="t " style="left:499.10px;top:1024.36px;font-size:9.97px;line-height:9.97px;color:#666;font-weight:400;transform:scaleX(0.8772);transform-origin:0 0;">1.5</div>
<svg style="left:0;top:0" width="1400" height="1057"><defs><clipPath id="ca"><rect x="480" y="755.6" width="900" height="400"/></clipPath></defs><g clip-path="url(#ca)"><g stroke="#ecc141" stroke-width="1.7" fill="none" stroke-linejoin="round"><path d="M519.4 1147 L521.0 990.8 L522.6 1147"/><path d="M520.4 1147 L522.0 912.4 L523.6 1147"/><path d="M522.9 1147 L524.5 912.4 L526.1 1147"/><path d="M523.4 1147 L525.0 990.8 L526.6 1147"/><path d="M525.9 1147 L527.5 834.0 L529.1 1147"/><path d="M527.4 1147 L529.0 990.8 L530.6 1147"/><path d="M530.8 1147 L532.4 834.0 L534.0 1147"/><path d="M531.4 1147 L533.0 990.8 L534.6 1147"/><path d="M535.4 1147 L537.0 990.8 L538.6 1147"/><path d="M537.1 1147 L538.7 912.4 L540.3 1147"/><path d="M539.4 1147 L541.0 990.8 L542.6 1147"/><path d="M542.4 1147 L544.0 990.8 L545.6 1147"/><path d="M547.4 1147 L549.0 990.8 L550.6 1147"/><path d="M551.0 1147 L552.6 834.0 L554.2 1147"/><path d="M554.4 1147 L556.0 990.8 L557.6 1147"/><path d="M557.4 1147 L559.0 990.8 L560.6 1147"/><path d="M560.7 1147 L562.3 834.0 L563.9 1147"/><path d="M564.4 1147 L566.0 990.8 L567.6 1147"/><path d="M567.4 1147 L569.0 990.8 L570.6 1147"/><path d="M571.6 1147 L573.2 834.0 L574.8 1147"/><path d="M575.4 1147 L577.0 990.8 L578.6 1147"/><path d="M580.2 1147 L581.8 990.8 L583.4 1147"/><path d="M584.7 1147 L586.3 990.8 L587.9 1147"/><path d="M588.7 1147 L590.3 990.8 L591.9 1147"/><path d="M616.0 1147 L617.6 990.8 L619.2 1147"/><path d="M618.4 1147 L620.0 990.8 L621.6 1147"/><path d="M631.7 1147 L633.3 912.4 L634.9 1147"/><path d="M641.2 1147 L642.8 990.8 L644.4 1147"/><path d="M647.4 1147 L649.0 990.8 L650.6 1147"/><path d="M653.0 1147 L654.6 990.8 L656.2 1147"/><path d="M656.4 1147 L658.0 912.4 L659.6 1147"/><path d="M657.4 1147 L659.0 990.8 L660.6 1147"/><path d="M659.1 1147 L660.7 912.4 L662.3 1147"/><path d="M662.0 1147 L663.6 990.8 L665.2 1147"/><path d="M884.0 1147 L885.6 990.8 L887.2 1147"/><path d="M885.4 1147 L887.0 912.4 L888.6 1147"/><path d="M886.4 1147 L888.0 990.8 L889.6 1147"/><path d="M887.3 1147 L888.9 834.0 L890.5 1147"/><path d="M888.4 1147 L890.0 912.4 L891.6 1147"/><path d="M893.9 1147 L895.5 755.6 L897.1 1147"/><path d="M905.0 1147 L906.6 990.8 L908.2 1147"/><path d="M918.8 1147 L920.4 990.8 L922.0 1147"/><path d="M921.8 1147 L923.4 990.8 L925.0 1147"/><path d="M925.4 1147 L927.0 912.4 L928.6 1147"/><path d="M941.9 1147 L943.5 990.8 L945.1 1147"/><path d="M947.9 1147 L949.5 912.4 L951.1 1147"/><path d="M954.8 1147 L956.4 990.8 L958.0 1147"/><path d="M959.0 1147 L960.6 990.8 L962.2 1147"/><path d="M988.4 1147 L990.0 990.8 L991.6 1147"/><path d="M992.0 1147 L993.6 912.4 L995.2 1147"/><path d="M995.0 1147 L996.6 834.0 L998.2 1147"/><path d="M999.8 1147 L1001.4 990.8 L1003.0 1147"/><path d="M1004.9 1147 L1006.5 912.4 L1008.1 1147"/><path d="M1016.3 1147 L1017.9 990.8 L1019.5 1147"/><path d="M1024.4 1147 L1026.0 990.8 L1027.6 1147"/><path d="M1028.0 1147 L1029.6 990.8 L1031.2 1147"/><path d="M1252.7 1147 L1254.3 912.4 L1255.9 1147"/><path d="M1258.2 1147 L1259.8 990.8 L1261.4 1147"/><path d="M1260.7 1147 L1262.3 912.4 L1263.9 1147"/><path d="M1261.9 1147 L1263.5 990.8 L1265.1 1147"/><path d="M1264.9 1147 L1266.5 990.8 L1268.1 1147"/><path d="M1267.3 1147 L1268.9 990.8 L1270.5 1147"/><path d="M1273.3 1147 L1274.9 912.4 L1276.5 1147"/><path d="M1275.6 1147 L1277.2 990.8 L1278.8 1147"/><path d="M1287.4 1147 L1289.0 990.8 L1290.6 1147"/><path d="M1295.4 1147 L1297.0 912.4 L1298.6 1147"/><path d="M1301.3 1147 L1302.9 990.8 L1304.5 1147"/><path d="M1303.8 1147 L1305.4 990.8 L1307.0 1147"/><path d="M1305.8 1147 L1307.4 990.8 L1309.0 1147"/><path d="M1310.4 1147 L1312.0 990.8 L1313.6 1147"/><path d="M1343.6 1147 L1345.2 990.8 L1346.8 1147"/></g><g fill="#ecc141"><circle cx="521.0" cy="990.8" r="2.6"/><circle cx="522.0" cy="912.4" r="2.6"/><circle cx="524.5" cy="912.4" r="2.6"/><circle cx="525.0" cy="990.8" r="2.6"/><circle cx="527.5" cy="912.4" r="2.6"/><circle cx="527.5" cy="834.0" r="2.6"/><circle cx="529.0" cy="990.8" r="2.6"/><circle cx="532.4" cy="912.4" r="2.6"/><circle cx="532.4" cy="834.0" r="2.6"/><circle cx="533.0" cy="990.8" r="2.6"/><circle cx="537.0" cy="990.8" r="2.6"/><circle cx="538.7" cy="912.4" r="2.6"/><circle cx="541.0" cy="990.8" r="2.6"/><circle cx="544.0" cy="990.8" r="2.6"/><circle cx="549.0" cy="990.8" r="2.6"/><circle cx="552.6" cy="990.8" r="2.6"/><circle cx="552.6" cy="912.4" r="2.6"/><circle cx="552.6" cy="834.0" r="2.6"/><circle cx="556.0" cy="990.8" r="2.6"/><circle cx="559.0" cy="990.8" r="2.6"/><circle cx="562.3" cy="990.8" r="2.6"/><circle cx="562.3" cy="912.4" r="2.6"/><circle cx="562.3" cy="834.0" r="2.6"/><circle cx="566.0" cy="990.8" r="2.6"/><circle cx="569.0" cy="990.8" r="2.6"/><circle cx="573.2" cy="990.8" r="2.6"/><circle cx="573.2" cy="912.4" r="2.6"/><circle cx="573.2" cy="834.0" r="2.6"/><circle cx="577.0" cy="990.8" r="2.6"/><circle cx="581.8" cy="990.8" r="2.6"/><circle cx="586.3" cy="990.8" r="2.6"/><circle cx="590.3" cy="990.8" r="2.6"/><circle cx="617.6" cy="990.8" r="2.6"/><circle cx="620.0" cy="990.8" r="2.6"/><circle cx="633.3" cy="990.8" r="2.6"/><circle cx="633.3" cy="912.4" r="2.6"/><circle cx="642.8" cy="990.8" r="2.6"/><circle cx="649.0" cy="990.8" r="2.6"/><circle cx="654.6" cy="990.8" r="2.6"/><circle cx="658.0" cy="912.4" r="2.6"/><circle cx="659.0" cy="990.8" r="2.6"/><circle cx="660.7" cy="912.4" r="2.6"/><circle cx="663.6" cy="990.8" r="2.6"/><circle cx="885.6" cy="990.8" r="2.6"/><circle cx="887.0" cy="912.4" r="2.6"/><circle cx="888.0" cy="990.8" r="2.6"/><circle cx="888.9" cy="834.0" r="2.6"/><circle cx="890.0" cy="912.4" r="2.6"/><circle cx="895.5" cy="990.8" r="2.6"/><circle cx="895.5" cy="912.4" r="2.6"/><circle cx="895.5" cy="834.0" r="2.6"/><circle cx="895.5" cy="755.6" r="2.6"/><circle cx="906.6" cy="990.8" r="2.6"/><circle cx="920.4" cy="990.8" r="2.6"/><circle cx="923.4" cy="990.8" r="2.6"/><circle cx="927.0" cy="990.8" r="2.6"/><circle cx="927.0" cy="912.4" r="2.6"/><circle cx="943.5" cy="990.8" r="2.6"/><circle cx="949.5" cy="990.8" r="2.6"/><circle cx="949.5" cy="912.4" r="2.6"/><circle cx="956.4" cy="990.8" r="2.6"/><circle cx="960.6" cy="990.8" r="2.6"/><circle cx="990.0" cy="990.8" r="2.6"/><circle cx="993.6" cy="990.8" r="2.6"/><circle cx="993.6" cy="912.4" r="2.6"/><circle cx="996.6" cy="912.4" r="2.6"/><circle cx="996.6" cy="834.0" r="2.6"/><circle cx="1001.4" cy="990.8" r="2.6"/><circle cx="1006.5" cy="990.8" r="2.6"/><circle cx="1006.5" cy="912.4" r="2.6"/><circle cx="1017.9" cy="990.8" r="2.6"/><circle cx="1026.0" cy="990.8" r="2.6"/><circle cx="1029.6" cy="990.8" r="2.6"/><circle cx="1254.3" cy="990.8" r="2.6"/><circle cx="1254.3" cy="912.4" r="2.6"/><circle cx="1259.8" cy="990.8" r="2.6"/><circle cx="1262.3" cy="912.4" r="2.6"/><circle cx="1263.5" cy="990.8" r="2.6"/><circle cx="1266.5" cy="990.8" r="2.6"/><circle cx="1268.9" cy="990.8" r="2.6"/><circle cx="1274.9" cy="990.8" r="2.6"/><circle cx="1274.9" cy="912.4" r="2.6"/><circle cx="1277.2" cy="990.8" r="2.6"/><circle cx="1289.0" cy="990.8" r="2.6"/><circle cx="1297.0" cy="990.8" r="2.6"/><circle cx="1297.0" cy="912.4" r="2.6"/><circle cx="1302.9" cy="990.8" r="2.6"/><circle cx="1305.4" cy="990.8" r="2.6"/><circle cx="1307.4" cy="990.8" r="2.6"/><circle cx="1312.0" cy="990.8" r="2.6"/><circle cx="1345.2" cy="990.8" r="2.6"/></g></g></svg>
<div class="r" style="left:0.00px;top:1055.00px;width:1400.00px;height:2.00px;background:#f7f8f9"></div>
<div class="r" style="left:157.00px;top:1054.00px;width:1243.00px;height:1.00px;background:#c5d0d7"></div>
<svg style="left:0;top:0" width="1" height="1"><defs><linearGradient id="ga" x1="0" y1="0" x2="0.12" y2="1"><stop offset="0" stop-color="#f1b677"/><stop offset="0.56" stop-color="#f0a862"/><stop offset="0.63" stop-color="#ef7d2b"/><stop offset="1" stop-color="#ef6c1c"/></linearGradient></defs><g transform="translate(13.3 16.3) scale(0.9964 0.9955) translate(-13.1 -16.3)"><path d="M17.3 16.4 Q27 15.9 35.8 16.6 Q40.6 17.2 41 21.5 Q41.4 27.5 40.8 33.5 Q40.3 38 35.5 38.5 Q27 39.2 17.8 38.6 Q13.6 38.3 13.3 34 Q12.8 27.5 13.3 21 Q13.6 16.7 17.3 16.4Z" fill="url(#ga)"/><path d="M16.2 33 L18.1 23.6 Q18.3 22.9 19 22.9 H24.5 Q26.2 22.9 25.9 24.6 L24.3 33 H21.7 L23.2 25.4 Q23.3 25.1 23 25.1 H20.6 L18.8 33 Z" fill="#fff"/><path d="M27.9 22.9 H38.2 L37.7 25.1 H34.1 L32.6 33 H29.9 L31.4 25.1 H27.5 Z" fill="#fff"/></g></svg>
<svg style="left:0;top:0" width="1" height="1"><g transform="translate(49 33.8) skewX(-9)"><text x="0" y="0" font-family="Liberation Sans" font-weight="700" font-size="17.57" fill="#1b2a36" textLength="53.00" lengthAdjust="spacing">neoτel</text></g></svg>
<svg style="left:0;top:0" width="1" height="1"><path d="M49.2 33.8 l1.8 -7.5 h2.3 l-1.8 7.5z" fill="#ef7a2a"/></svg>
<svg style="left:0;top:0" width="1" height="1"><defs><linearGradient id="bn" x1="0" y1="0" x2="1" y2="0.3"><stop offset="0" stop-color="#c84806"/><stop offset="0.35" stop-color="#d2560a"/><stop offset="0.5" stop-color="#e2650e"/><stop offset="0.7" stop-color="#da5d0b"/><stop offset="1" stop-color="#e0620c"/></linearGradient><linearGradient id="bg2" x1="0" y1="0" x2="0" y2="1"><stop offset="0" stop-color="#eceef2"/><stop offset="1" stop-color="#f3f4f6"/></linearGradient></defs><rect x="550.9" y="5.8" width="345.7" height="44.1" fill="url(#bg2)"/><path d="M550.9 5.8 H762.9 L825.7 49.9 H550.9Z" fill="url(#bn)"/></svg>
<div class="t " style="left:563.10px;top:13.82px;font-size:12.85px;line-height:12.85px;color:#fff;font-weight:700;transform:scaleX(0.9259);transform-origin:0 0;text-shadow:0.5px 0.5px 0.5px rgba(0,0,0,.35);">/ ¿NECESITAS AYUDA?</div>
<div class="t " style="left:604.30px;top:28.77px;font-size:15.98px;line-height:15.98px;color:#fff;font-weight:700;transform:scaleX(0.9259);transform-origin:0 0;text-shadow:0.5px 0.5px 0.5px rgba(0,0,0,.35);">/ NEOTEL HELPDESK</div>
<svg style="left:0;top:0" width="1" height="1"><defs><linearGradient id="gb" x1="0" y1="0" x2="0.12" y2="1"><stop offset="0" stop-color="#f1b677"/><stop offset="0.56" stop-color="#f0a862"/><stop offset="0.63" stop-color="#ef7d2b"/><stop offset="1" stop-color="#ef6c1c"/></linearGradient></defs><g transform="translate(804.6 9.1) scale(0.9606 0.9598) translate(-13.1 -16.3)"><path d="M17.3 16.4 Q27 15.9 35.8 16.6 Q40.6 17.2 41 21.5 Q41.4 27.5 40.8 33.5 Q40.3 38 35.5 38.5 Q27 39.2 17.8 38.6 Q13.6 38.3 13.3 34 Q12.8 27.5 13.3 21 Q13.6 16.7 17.3 16.4Z" fill="url(#gb)"/><path d="M16.2 33 L18.1 23.6 Q18.3 22.9 19 22.9 H24.5 Q26.2 22.9 25.9 24.6 L24.3 33 H21.7 L23.2 25.4 Q23.3 25.1 23 25.1 H20.6 L18.8 33 Z" fill="#fff"/><path d="M27.9 22.9 H38.2 L37.7 25.1 H34.1 L32.6 33 H29.9 L31.4 25.1 H27.5 Z" fill="#fff"/></g></svg>
<svg style="left:0;top:0" width="1" height="1"><g transform="translate(838 26.5) skewX(-9)"><text x="0" y="0" font-family="Liberation Sans" font-weight="700" font-size="16.16" fill="#1b2a36" textLength="51.70" lengthAdjust="spacing">neoτel</text></g></svg>
<svg style="left:0;top:0" width="1" height="1"><path d="M838.2 26.5 l1.7 -7 h2.2 l-1.7 7z" fill="#ef7a2a"/></svg>
<div class="t " style="left:1334.10px;top:22.97px;font-size:11.02px;line-height:11.02px;color:#23282c;font-weight:700;transform:scaleX(0.9434);transform-origin:0 0;">Neotel</div>
<svg style="left:0;top:0" width="1" height="1"><defs><clipPath id="av"><circle cx="1386.4" cy="27.45" r="12.3"/></clipPath></defs><circle cx="1386.4" cy="27.45" r="12.6" fill="#8a8a8a"/><circle cx="1386.4" cy="27.45" r="12.1" fill="#e55a05"/><g clip-path="url(#av)" fill="#fafafa"><ellipse cx="1386.4" cy="22.2" rx="4.2" ry="5.6"/><path d="M1383.6 26 h5.6 l0.8 3.2 c4.5 0.6 7 2 7.4 4.6 v2.3 h-22 v-2.3 c0.4 -2.6 2.9 -4 7.4 -4.6z"/></g></svg>
<svg style="left:0;top:0" width="1" height="1"><g transform="translate(19.4 108.10)" fill="none" stroke="#3f5562" stroke-width="1"><path d="M-4.2 3.6 A5.3 5.3 0 1 1 4.2 3.6"/><path d="M0 0.6 L2.6 -1.6"/></g></svg>
<svg style="left:0;top:0" width="1" height="1"><g transform="translate(19.4 141.32)" fill="none" stroke="#3f5562" stroke-width="1"><circle r="4"/><circle r="1.7"/><rect x="-1" y="-5.5" width="2" height="1.8" transform="rotate(0)" fill="#3f5562" stroke="none"/><rect x="-1" y="-5.5" width="2" height="1.8" transform="rotate(45)" fill="#3f5562" stroke="none"/><rect x="-1" y="-5.5" width="2" height="1.8" transform="rotate(90)" fill="#3f5562" stroke="none"/><rect x="-1" y="-5.5" width="2" height="1.8" transform="rotate(135)" fill="#3f5562" stroke="none"/><rect x="-1" y="-5.5" width="2" height="1.8" transform="rotate(180)" fill="#3f5562" stroke="none"/><rect x="-1" y="-5.5" width="2" height="1.8" transform="rotate(225)" fill="#3f5562" stroke="none"/><rect x="-1" y="-5.5" width="2" height="1.8" transform="rotate(270)" fill="#3f5562" stroke="none"/><rect x="-1" y="-5.5" width="2" height="1.8" transform="rotate(315)" fill="#3f5562" stroke="none"/></g></svg>
<svg style="left:0;top:0" width="1" height="1"><g transform="translate(19.4 174.54)" fill="none" stroke="#3f5562" stroke-width="1"><path d="M-5.2 5.3 h10.4 v-1.2 c0-1.5-2-2.2-3.4-2.6 v-1 c1-0.8 1.5-2 1.5-3.2 c0-1.8-1.2-3-2.9-3 s-2.9 1.2-2.9 3 c0 1.2 0.5 2.4 1.5 3.2 v1 c-1.4 0.4-3.4 1.1-3.4 2.6z"/></g></svg>
<svg style="left:0;top:0" width="1" height="1"><g transform="translate(19.4 207.76)" fill="none" stroke="#3f5562" stroke-width="1"><path d="M-4.8 4 v-3.5 a4.8 4.8 0 0 1 9.6 0 v3.5"/><rect x="-5.2" y="0.8" width="1.8" height="4.6" rx="0.6"/><rect x="3.4" y="0.8" width="1.8" height="4.6" rx="0.6"/></g></svg>
<svg style="left:0;top:0" width="1" height="1"><g transform="translate(19.4 240.98)" fill="none" stroke="#3f5562" stroke-width="1"><path d="M-3.6 -5.5 h4.6 l2.8 2.8 v8.2 h-7.4z"/><path d="M1 -5.5 v2.8 h2.8"/></g></svg>
<svg style="left:0;top:0" width="1" height="1"><g transform="translate(19.4 274.20)" fill="none" stroke="#e0672c" stroke-width="1"><rect x="-5" y="-3.7" width="1.4" height="1.4" fill="#e0672c" stroke="none"/><path d="M-2.6 -3 h7.8" stroke-width="1.2"/><rect x="-5" y="-0.7" width="1.4" height="1.4" fill="#e0672c" stroke="none"/><path d="M-2.6 0 h7.8" stroke-width="1.2"/><rect x="-5" y="2.3" width="1.4" height="1.4" fill="#e0672c" stroke="none"/><path d="M-2.6 3 h7.8" stroke-width="1.2"/></g></svg>
<svg style="left:0;top:0" width="1" height="1"><g transform="translate(19.4 307.42)" fill="none" stroke="#3f5562" stroke-width="1"><rect x="-5" y="-3.7" width="1.4" height="1.4" fill="#3f5562" stroke="none"/><path d="M-2.6 -3 h7.8" stroke-width="1.2"/><rect x="-5" y="-0.7" width="1.4" height="1.4" fill="#3f5562" stroke="none"/><path d="M-2.6 0 h7.8" stroke-width="1.2"/><rect x="-5" y="2.3" width="1.4" height="1.4" fill="#3f5562" stroke="none"/><path d="M-2.6 3 h7.8" stroke-width="1.2"/></g></svg>
<svg style="left:0;top:0" width="1" height="1"><g transform="translate(19.4 340.64)" fill="none" stroke="#3f5562" stroke-width="1"><path d="M-5 -2.8 h10 v7.6 h-10z"/><path d="M-4 -2.8 v-1.6 h4.5 l1.4 1.6"/><path d="M-5 0.2 h1.4"/></g></svg>
<svg style="left:0;top:0" width="1" height="1"><g transform="translate(19.4 373.86)" fill="none" stroke="#3f5562" stroke-width="1"><rect x="-5.2" y="-3.7" width="10.4" height="7.6" rx="1"/><path d="M-5.2 -1.4 h10.4" stroke-width="1.8"/></g></svg>
<svg style="left:0;top:0" width="1" height="1"><g transform="translate(19.4 407.08)" fill="none" stroke="#3f5562" stroke-width="1"><ellipse cx="-1.4" cy="-2.3" rx="4" ry="3"/><path d="M2.5 -1 a3.3 2.6 0 0 1 -0.2 4.8 l1.4 1.5 l-2.6 -0.9 a3.5 2.4 0 0 1 -3.4 -1.9"/></g></svg>
<svg style="left:0;top:0" width="1" height="1"><g transform="translate(19.4 440.30)" fill="none" stroke="#3f5562" stroke-width="1"><rect x="-5" y="-0.5" width="2.4" height="5.5"/><rect x="-1.2" y="1.5" width="2.4" height="3.5"/><rect x="2.6" y="-5" width="2.4" height="10"/><path d="M-5.5 5 h11"/></g></svg>
<svg style="left:0;top:0" width="1" height="1"><g transform="translate(19.4 473.52)" fill="none" stroke="#3f5562" stroke-width="1"><path d="M-3 -2.5 v-2.8 h6 v2.8"/><rect x="-5.3" y="-2.5" width="10.6" height="5.2" rx="1"/><rect x="-3" y="1.2" width="6" height="4.2"/></g></svg>
<svg style="left:0;top:0" width="1" height="1"><g transform="translate(19.4 506.74)" fill="none" stroke="#3f5562" stroke-width="1"><rect x="-3.8" y="-5.5" width="7.6" height="11"/><path d="M-2.8 -5.5 v11"/></g></svg>
<svg style="left:0;top:0" width="1" height="1"><g transform="translate(19.4 539.96)" fill="none" stroke="#3f5562" stroke-width="1"><circle r="5.3"/><path d="M2.6 0 h-5 M-0.4 -2.3 l-2.2 2.3 l2.2 2.3"/></g></svg>
<svg style="left:0;top:0" width="1" height="1"><g transform="translate(19.4 573.18)" fill="none" stroke="#3f5562" stroke-width="1"><rect x="-5" y="-3.7" width="1.4" height="1.4" fill="#3f5562" stroke="none"/><path d="M-2.6 -3 h7.8" stroke-width="1.2"/><rect x="-5" y="-0.7" width="1.4" height="1.4" fill="#3f5562" stroke="none"/><path d="M-2.6 0 h7.8" stroke-width="1.2"/><rect x="-5" y="2.3" width="1.4" height="1.4" fill="#3f5562" stroke="none"/><path d="M-2.6 3 h7.8" stroke-width="1.2"/></g></svg>
<svg style="left:0;top:0" width="1" height="1"><g transform="translate(19.4 606.40)" fill="none" stroke="#3f5562" stroke-width="1"><rect x="-5.2" y="-4.8" width="10.4" height="9.8" rx="0.6"/><path d="M-5.2 -2.4 h10.4"/><rect x="-3.1" y="-0.5" width="1" height="1" fill="#3f5562" stroke="none"/><rect x="-3.1" y="2.1" width="1" height="1" fill="#3f5562" stroke="none"/><rect x="-0.5" y="-0.5" width="1" height="1" fill="#3f5562" stroke="none"/><rect x="-0.5" y="2.1" width="1" height="1" fill="#3f5562" stroke="none"/><rect x="2.1" y="-0.5" width="1" height="1" fill="#3f5562" stroke="none"/><rect x="2.1" y="2.1" width="1" height="1" fill="#3f5562" stroke="none"/></g></svg>
<svg style="left:0;top:0" width="1" height="1"><g transform="translate(19.4 639.62)" fill="none" stroke="#3f5562" stroke-width="1"><circle r="5.3"/><circle r="2.2"/><path d="M-3.75 -3.75 L-1.55 -1.55 M3.75 -3.75 L1.55 -1.55 M-3.75 3.75 L-1.55 1.55 M3.75 3.75 L1.55 1.55"/></g></svg>
<svg style="left:0;top:0" width="1" height="1"><path d="M138.9 70.6 L137.3 69.9 C136.3 68.6 135.6 66.9 134.8 65.9 C134 64.9 132.5 65.2 132.2 66.5 C132 67.6 132.4 68.8 132.7 69.9 H126.6 C125.1 69.9 124.3 71 124.3 72.1 C124.3 73.2 125.1 74.3 126.6 74.3 H129.9 L131 79 C131.4 80.5 132.6 81.2 134.1 81.2 C135.9 81.2 137.3 80.5 138.9 80.3" fill="none" stroke="#5d7583" stroke-width="1.9" stroke-linejoin="round"/><rect x="138.6" y="69.8" width="4.8" height="10.8" fill="#5d7583"/><rect x="140.6" y="77.1" width="1.4" height="1.4" fill="#222a30"/></svg>
</body></html>
